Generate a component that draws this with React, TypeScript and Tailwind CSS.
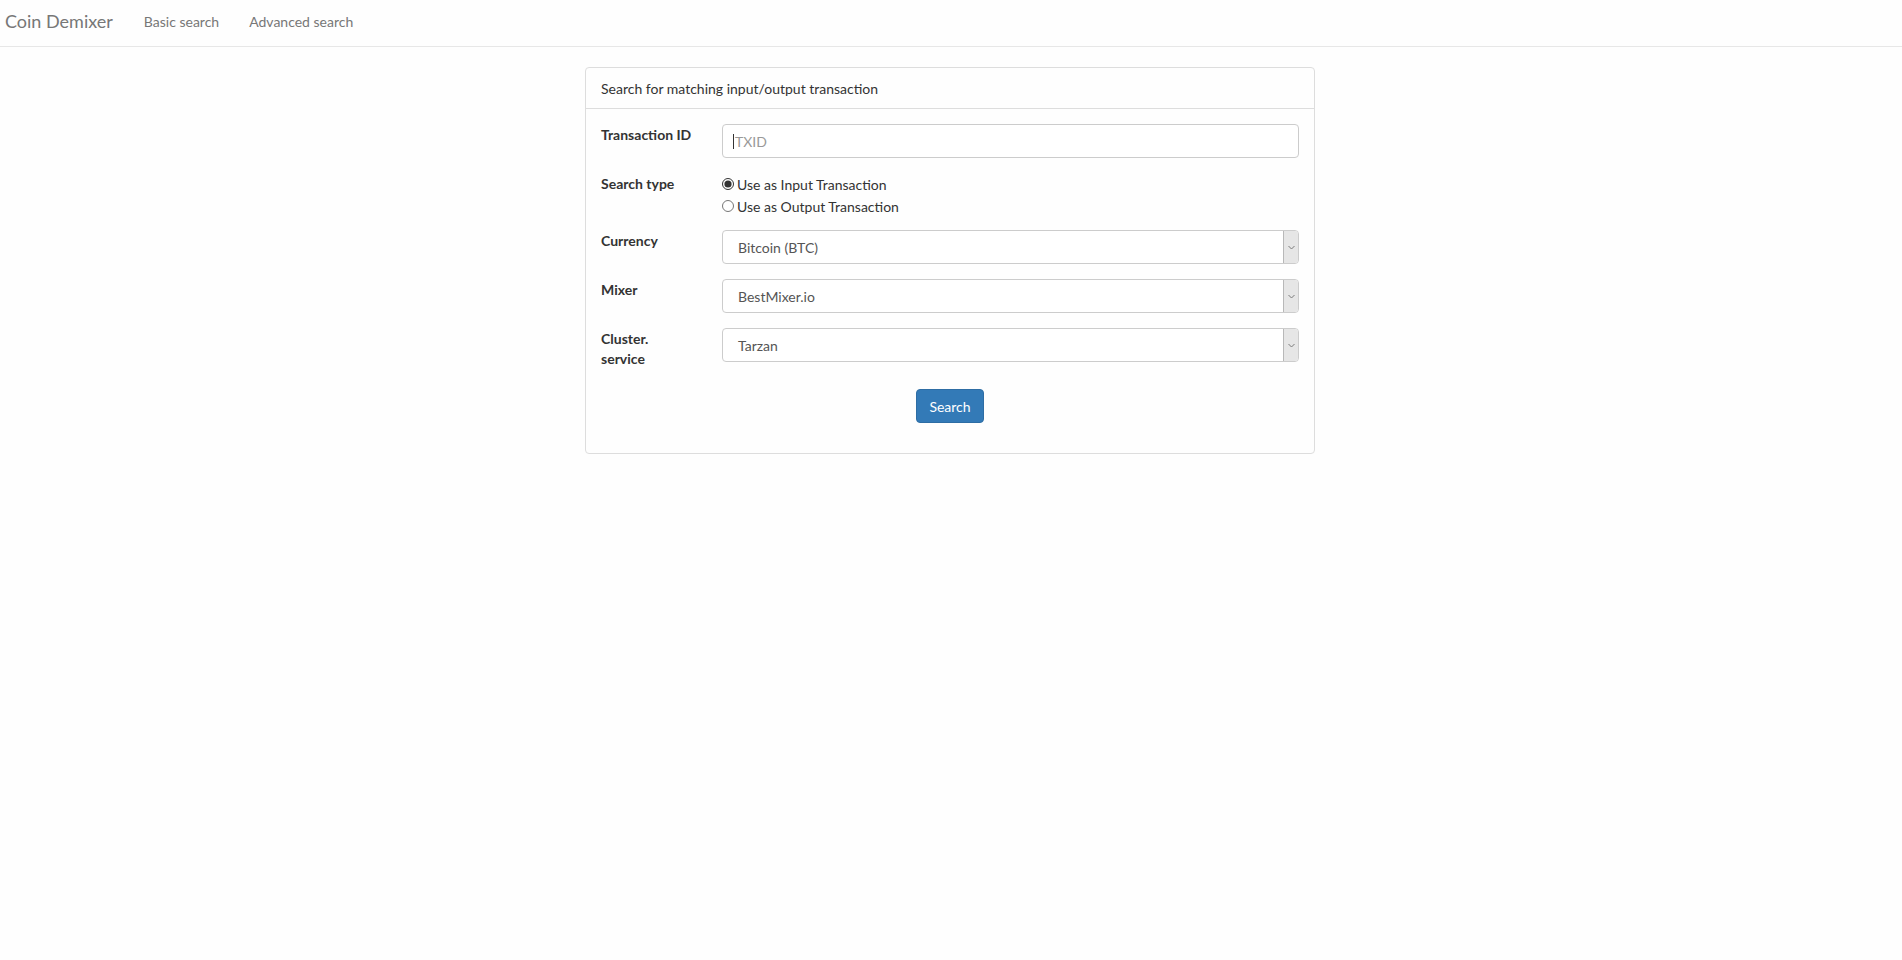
const font = { fontFamily: "Lato, 'Open Sans', sans-serif" };

function FakeSelect({ value }: { value: string }) {
  return (
    <div className="flex h-[34px] w-full rounded-[4px] border border-[#cccccc] bg-white overflow-hidden">
      <div className="flex flex-1 items-center pl-[15px] text-[14px] text-[#555555]">{value}</div>
      <div className="flex w-[15px] items-center justify-center border-l border-[#b8b8b8] bg-[#e6e6e6]">
        <svg width="7" height="5" viewBox="0 0 7 5" fill="none">
          <path d="M0.5 1l3 3 3-3" stroke="#7a7a7a" strokeWidth="1" />
        </svg>
      </div>
    </div>
  );
}

function Row({ label, children, className = "" }: { label: React.ReactNode; children: React.ReactNode; className?: string }) {
  return (
    <div className={"flex " + className}>
      <div className="w-[121px] shrink-0 pt-[1px] text-[14px] font-bold leading-[20px] text-[#333333]">{label}</div>
      <div className="flex-1">{children}</div>
    </div>
  );
}

export default function App() {
  return (
    <div className="min-h-screen bg-[#fefefe]" style={font}>
      {/* Navbar */}
      <nav className="flex h-[47px] items-center border-b border-[#e7e7e7] bg-[#fefefe] pb-[4px]">
        <span className="ml-[5px] text-[18px] text-[#777777]">Coin Demixer</span>
        <span className="ml-[31px] text-[14px] text-[#777777]">Basic search</span>
        <span className="ml-[30px] text-[14px] text-[#777777]">Advanced search</span>
      </nav>

      {/* Panel */}
      <main className="flex justify-center pt-[20px]">
        <div className="ml-[-2px] w-[730px] rounded-[4px] border border-[#dddddd] bg-[#fefefe]">
          <div className="flex h-[41px] items-center border-b border-[#dddddd] px-[15px] text-[14px] text-[#333333]">
            Search for matching input/output transaction
          </div>
          <div className="px-[15px] pt-[15px] pb-[30px]">
            <Row label="Transaction ID">
              <div className="flex h-[34px] items-center rounded-[4px] border border-[#cccccc] bg-white pl-[10px] text-[14px]">
                <span className="mr-[1px] h-[15px] w-px bg-[#333333]" />
                <span className="text-[#999999]">TXID</span>
              </div>
            </Row>
            <Row label="Search type" className="mt-[15px]">
              <div className="text-[14px] text-[#333333]">
                <label className="flex h-[22px] items-center">
                  <input type="radio" name="st" defaultChecked className="m-0 mr-[3px] h-[12px] w-[12px] accent-[#333333]" />
                  Use as Input Transaction
                </label>
                <label className="flex h-[22px] items-center">
                  <input type="radio" name="st" className="m-0 mr-[3px] h-[12px] w-[12px]" />
                  Use as Output Transaction
                </label>
              </div>
            </Row>
            <Row label="Currency" className="mt-[13px]">
              <FakeSelect value="Bitcoin (BTC)" />
            </Row>
            <Row label="Mixer" className="mt-[15px]">
              <FakeSelect value="BestMixer.io" />
            </Row>
            <Row label={<>Cluster.<br />service</>} className="mt-[15px]">
              <FakeSelect value="Tarzan" />
            </Row>
            <div className="mt-[20px] flex justify-center">
              <button className="h-[34px] w-[68px] rounded-[4px] border border-[#2e6da4] bg-[#337ab7] text-[14px] text-white">
                Search
              </button>
            </div>
          </div>
        </div>
      </main>
    </div>
  );
}
